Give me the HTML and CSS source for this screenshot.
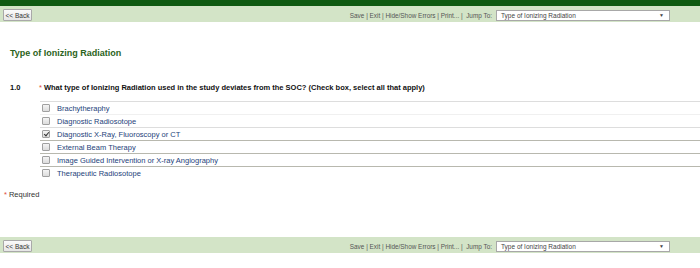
FILE: index.html
```html
<!DOCTYPE html>
<html lang="en">
<head>
    <meta charset="UTF-8">
    <title>Type of Ionizing Radiation</title>
    <link rel="stylesheet" href="styles.css">
</head>
<body>
    <div class="topbar"></div>
    <div class="toolbar">
        <button class="back">&lt;&lt; Back</button>
        <div class="tools">
            <span>Save | Exit | Hide/Show Errors | Print... | &nbsp;Jump To:</span>
            <div class="jump"><span>Type of Ionizing Radiation</span><span class="arrow">&#9660;</span></div>
        </div>
    </div>

    <div class="content">
        <h2>Type of Ionizing Radiation</h2>
        <div class="question">
            <span class="num">1.0</span>
            <span class="req">*</span>
            <span class="qtext">What type of Ionizing Radiation used in the study deviates from the SOC? (Check box, select all that apply)</span>
        </div>
        <div class="options">
            <div class="opt first"><span class="box"></span>Brachytheraphy</div>
            <div class="opt faint"><span class="box"></span>Diagnostic Radiosotope</div>
            <div class="opt"><span class="box checked"></span>Diagnostic X-Ray, Fluoroscopy or CT</div>
            <div class="opt dark"><span class="box"></span>External Beam Therapy</div>
            <div class="opt dark"><span class="box"></span>Image Guided Intervention or X-ray Angiography</div>
            <div class="opt dark"><span class="box"></span>Therapeutic Radiosotope</div>
        </div>
    </div>
    <p class="required"><span class="req">*</span>Required</p>

    <div class="toolbar bottom">
        <button class="back">&lt;&lt; Back</button>
        <div class="tools">
            <span>Save | Exit | Hide/Show Errors | Print... | &nbsp;Jump To:</span>
            <div class="jump"><span>Type of Ionizing Radiation</span><span class="arrow">&#9660;</span></div>
        </div>
    </div>
</body>
</html>
```

FILE: styles.css
```css
body {
    margin: 0;
    font-family: "Liberation Sans", Arial, sans-serif;
    font-size: 7.5px;
    color: #222;
    background: #fff;
}
.topbar {
    height: 6px;
    background-color: #0f5a12;
}
.toolbar {
    height: 16px;
    background-color: #d3e4c7;
    display: flex;
    align-items: center;
    justify-content: space-between;
    padding: 0 30px 0 3px;
}
.back {
    font-family: "Liberation Sans", Arial, sans-serif;
    font-size: 6.5px;
    height: 12px;
    width: 29px;
    padding: 0;
    margin-top: 2px;
    color: #333;
    border: 1px solid #a9a9a9;
    border-radius: 1px;
    background: linear-gradient(#fafafa, #e6e6e6);
}
.tools {
    display: flex;
    align-items: center;
    gap: 4px;
    color: #555;
    font-size: 6.4px;
    margin-top: 2px;
}
.jump {
    width: 163px;
    height: 9px;
    border: 1px solid #a8a8a8;
    background: #fff;
    display: flex;
    align-items: center;
    justify-content: space-between;
    padding: 0 5px 0 4px;
    font-size: 6.5px;
    color: #444;
}
.arrow {
    font-size: 5px;
}
.content {
    padding: 0 0 0 10px;
}
h2 {
    margin: 26px 0 0;
    font-size: 9px;
    line-height: 11px;
    color: #2b6320;
}
.question {
    display: flex;
    margin-top: 24px;
    line-height: 10px;
    font-weight: bold;
    color: #111;
}
.num {
    width: 29px;
}
.req {
    color: #e04a3a;
    font-weight: normal;
    margin-right: 2px;
}
.options {
    margin: 8px 0 0 30px;
}
.opt {
    height: 12px;
    border-top: 1px solid #ddd;
    display: flex;
    align-items: center;
    color: #24427a;
}
.opt.faint {
    border-top-color: #f0f0f0;
}
.opt.dark {
    border-top-color: #b8b8ae;
}
.box {
    width: 6px;
    height: 6px;
    border: 1px solid #a0a0a0;
    border-radius: 1px;
    background: linear-gradient(#f4f4f4, #dcdcdc);
    margin: 0 7px 0 2px;
    position: relative;
}
.box.checked::after {
    content: "";
    position: absolute;
    left: 1.5px;
    top: 0;
    width: 2px;
    height: 4px;
    border: solid #333;
    border-width: 0 1.2px 1.2px 0;
    transform: rotate(40deg);
}
.required {
    margin: 11px 0 0 4px;
    line-height: 10px;
    color: #333;
}
.bottom {
    margin-top: 37px;
}
```
